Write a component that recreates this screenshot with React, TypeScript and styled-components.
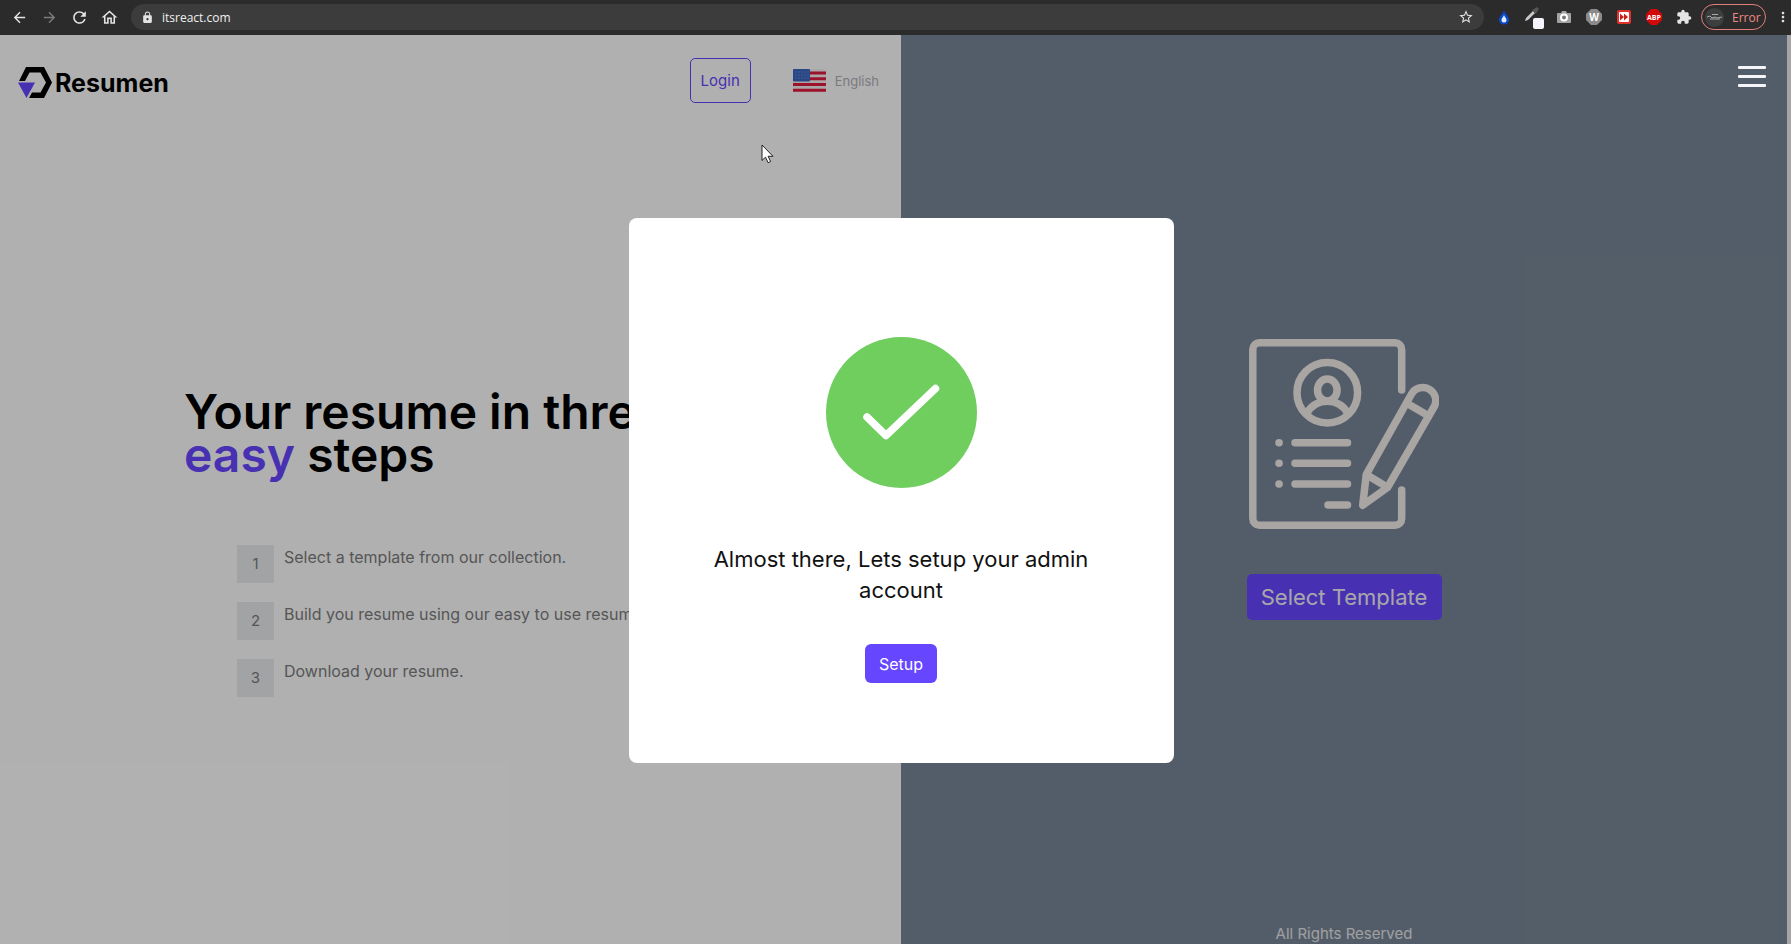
import React from "react";
import styled, { createGlobalStyle } from "styled-components";
import {
  MdArrowBack,
  MdArrowForward,
  MdRefresh,
  MdOutlineHome,
  MdLock,
  MdStarBorder,
  MdExtension,
  MdMoreVert,
} from "react-icons/md";

const accent = "#6646ff";

const GlobalStyle = createGlobalStyle`
  * { box-sizing: border-box; }
  body {
    margin: 0;
    font-family: Inter, "Open Sans", sans-serif;
  }
  h1, p, ol { margin: 0; padding: 0; }
  button { font: inherit; cursor: pointer; }
`;

const Window = styled.div`
  display: flex;
  flex-direction: column;
  height: 100vh;
  min-height: 760px;
  overflow: hidden;
`;

/* Browser toolbar */

const Toolbar = styled.div`
  display: flex;
  align-items: center;
  height: 35px;
  flex: none;
  padding: 0 0 1px 4px;
  background: #2b2b2b;
  color: #e4e4e4;
  font-family: "Open Sans", sans-serif;
  font-size: 12px;
`;

const ToolButton = styled.button<{ $dim?: boolean }>`
  display: flex;
  align-items: center;
  justify-content: center;
  width: 30px;
  height: 26px;
  flex: none;
  padding: 0;
  border: 0;
  background: none;
  color: ${(p) => (p.$dim ? "#7c7c7c" : "#e4e4e4")};
`;

const MenuButton = styled(ToolButton)`
  width: 16px;
  margin-left: 9px;
`;

const AddressBar = styled.div`
  display: flex;
  align-items: center;
  flex: 1;
  height: 26px;
  margin: 0 5px 0 7px;
  padding: 0 3px 0 10px;
  gap: 8px;
  border-radius: 13px;
  background: #3c3c3c;
`;

const AddressInput = styled.input`
  flex: 1;
  min-width: 0;
  padding: 0;
  border: 0;
  outline: 0;
  background: none;
  color: #f0f0f0;
  font: inherit;
`;

const Profile = styled.button`
  display: flex;
  align-items: center;
  gap: 8px;
  width: 65px;
  height: 26px;
  margin-left: 2px;
  padding: 0 3px;
  border: 1px solid #e0807c;
  border-radius: 13px;
  background: #2b2b2b;
  color: #f08a84;
`;

/* Page */

const Viewport = styled.div`
  position: relative;
  display: flex;
  flex: 1;
  min-height: 0;
`;

const Page = styled.div`
  position: relative;
  display: grid;
  grid-template-columns: 901fr 886fr;
  flex: 1;
`;

const ScrollTrack = styled.div`
  width: 4px;
  background: #a5a5a5;
`;

const Intro = styled.main`
  display: flex;
  flex-direction: column;
  background: #fdfdfd;
`;

const Header = styled.header`
  display: flex;
  align-items: center;
  padding: 23px 22px 0 18px;
`;

const Logo = styled.a`
  display: flex;
  align-items: center;
  gap: 3px;
  margin: 4px auto 0 0;
  color: #000;
  font-size: 25px;
  font-weight: 700;
  line-height: 32px;
  text-decoration: none;
`;

const LoginButton = styled.button`
  height: 45px;
  width: 61px;
  padding: 0;
  border: 1px solid ${accent};
  border-radius: 5px;
  background: none;
  color: ${accent};
  font-size: 15px;
`;

const Language = styled.button`
  display: flex;
  align-items: center;
  gap: 9px;
  margin-left: 42px;
  padding: 0;
  border: 0;
  background: none;
  color: #afafb4;
  font-size: 13px;
`;

const Pitch = styled.section`
  padding: 287px 40px 0 184px;
`;

const Title = styled.h1`
  max-width: 520px;
  font-size: 48px;
  font-weight: 600;
  line-height: 43px;
`;

const Highlight = styled.span`
  color: ${accent};
`;

const Steps = styled.ol`
  display: flex;
  flex-direction: column;
  gap: 19px;
  margin: 69px 0 0 53px;
  list-style: none;
`;

const Step = styled.li`
  display: flex;
  gap: 10px;
  color: #7b7b7b;
  font-size: 16px;
  line-height: 24px;
`;

const StepNumber = styled.span`
  width: 37px;
  height: 38px;
  flex: none;
  background: #e8eaec;
  font-size: 15px;
  line-height: 38px;
  text-align: center;
`;

const Aside = styled.aside`
  display: flex;
  flex-direction: column;
  align-items: center;
  background: #788697;
`;

const Action = styled.div`
  display: flex;
  flex: 1;
  flex-direction: column;
  align-items: center;
  gap: 45px;
  padding-top: 304px;
`;

const TemplateButton = styled.button`
  height: 46px;
  width: 195px;
  padding: 0;
  border: 0;
  border-radius: 5px;
  background: ${accent};
  color: #f0eef5;
  font-size: 22px;
`;

const Footer = styled.footer`
  color: #e4e4e6;
  font-size: 15px;
  line-height: 20px;
`;

const Overlay = styled.div`
  position: absolute;
  inset: 0;
  display: flex;
  align-items: center;
  justify-content: center;
  padding: 2px 0 0 15px;
  background: rgba(0, 0, 0, 0.3);
`;

const Dialog = styled.div`
  display: flex;
  flex-direction: column;
  align-items: center;
  width: 545px;
  height: 545px;
  padding: 119px 80px 0;
  border-radius: 8px;
  background: #fff;
`;

const Message = styled.p`
  margin: 56px 0 38px;
  color: #111;
  font-size: 22px;
  line-height: 31px;
  text-align: center;
`;

const SetupButton = styled.button`
  width: 72px;
  height: 39px;
  padding: 0;
  border: 0;
  border-radius: 6px;
  background: ${accent};
  color: #fff;
  font-size: 16px;
`;

const NavToggle = styled.button`
  position: absolute;
  top: 28px;
  right: 21px;
  display: flex;
  flex-direction: column;
  gap: 6px;
  padding: 3px 0;
  border: 0;
  background: none;
`;

const NavLine = styled.span`
  width: 28px;
  height: 3px;
  border-radius: 1px;
  background: #f4f5fa;
`;

const Pointer = styled.svg`
  position: absolute;
  top: 109px;
  left: 761px;
`;

const steps = [
  "Select a template from our collection.",
  "Build you resume using our easy to use resume builder.",
  "Download your resume.",
];

const DropIcon = () => (
  <svg width="12" height="16" viewBox="0 0 12 16">
    <path d="M6 1C7 5 11 7 11 11a5 4.500 0 0 1-10 0C1 7 5 5 6 1z" fill="#0b47c8" />
    <path d="M6 6c.5 2 2.500 3 2.500 5a2.500 2.500 0 0 1-5 0C3.500 9 5.500 8 6 6z" fill="#d8efff" />
  </svg>
);

const PickerIcon = () => (
  <svg width="22" height="24" viewBox="0 0 22 24">
    <path d="M2 16l1-3 7-7 2 2-7 7z" fill="#c9c9c9" />
    <path d="M9 5l4 4 1-2 2-3-2-2-3 2z" fill="#555" />
    <rect x="10" y="13" width="11" height="11" rx="2" fill="#f4f4fc" />
  </svg>
);

const CameraIcon = () => (
  <svg width="14" height="14" viewBox="0 0 14 14">
    <path d="M1 3h3l1-2h4l1 2h3a1 1 0 0 1 1 1v8a1 1 0 0 1-1 1H1a1 1 0 0 1-1-1V4a1 1 0 0 1 1-1z" fill="#a3a3a3" />
    <circle cx="7" cy="7.500" r="3" fill="#777" stroke="#fff" strokeWidth="2" />
  </svg>
);

const OctagonIcon = () => (
  <svg width="16" height="16" viewBox="0 0 16 16">
    <path d="M5 0h6l5 5v6l-5 5H5l-5-5V5z" fill="#8b8b8b" />
    <text x="8" y="12" textAnchor="middle" fontSize="10" fontWeight="700" fill="#fff">W</text>
  </svg>
);

const ForwardIcon = () => (
  <svg width="14" height="14" viewBox="0 0 14 14">
    <rect width="14" height="14" rx="2" fill="#e2302a" />
    <rect x="2" y="2" width="10" height="10" rx="1" fill="#fff" />
    <path d="M3 3.500L7 7l-4 3.500zM7 3.500L11 7l-4 3.500z" fill="#c8201c" />
  </svg>
);

const AdBlockIcon = () => (
  <svg width="16" height="16" viewBox="0 0 16 16">
    <path d="M5 0h6l5 5v6l-5 5H5l-5-5V5z" fill="#d40808" />
    <text x="8" y="11" textAnchor="middle" fontSize="7" fontWeight="700" fill="#fff">ABP</text>
  </svg>
);

const AvatarIcon = () => (
  <svg width="19" height="19" viewBox="0 0 19 19">
    <circle cx="9.500" cy="9.500" r="9.500" fill="#3d3f3e" />
    <path d="M7 6.500h6M2 9l3-1 2 2 3-1 2 1 5-1M5 11h10" stroke="#a7aaa8" fill="none" />
  </svg>
);

const LogoMark = () => (
  <svg width="34" height="32" viewBox="0 0 34 32" aria-hidden="true">
    <path
      d="M1 14L8 0h18l8 15.500L26 31H11l3-5.500h8.500L28 15.500 22.500 5.500h-11L7 14z"
      fill="#000"
    />
    <path d="M0 15.500h17L8.500 31z" fill={accent} />
  </svg>
);

const Flag = () => (
  <svg width="33" height="23" viewBox="0 0 33 23" aria-hidden="true">
    <rect width="33" height="23" rx="1" fill="#f4f0f2" />
    <path d="M0 4h33M0 9.700h33M0 15.400h33M0 21.300h33" stroke="#e01c3f" strokeWidth="3" />
    <rect width="17" height="12.500" rx="1" fill="#3b66c0" />
    <path d="M2.500 3h13M2.500 6h13M2.500 9h13" stroke="#8fa9e0" strokeWidth="1" strokeDasharray="1 2" />
  </svg>
);

const ResumeDrawing = () => (
  <svg
    width="190"
    height="190"
    viewBox="0 0 190 190"
    fill="none"
    stroke="#f1ecea"
    strokeWidth="7.500"
    strokeLinecap="round"
    strokeLinejoin="round"
    aria-hidden="true"
  >
    <path d="M152.700 51V10.500a6.700 6.700 0 0 0-6.700-6.700H10.500a6.700 6.700 0 0 0-6.700 6.700v169a6.700 6.700 0 0 0 6.700 6.700H146a6.700 6.700 0 0 0 6.700-6.700V151" />
    <circle cx="78.300" cy="53.700" r="30.300" />
    <ellipse cx="78.300" cy="51" rx="9.800" ry="11" />
    <path d="M58 74Q65 62.300 78.300 62.300T98.700 74" />
    <path d="M46 103.700h52.500M46 124.300h52.500M46 145h52.500M79 166h19.500" />
    <path d="M30 103.700h.1M30 124.300h.1M30 145h.1" />
    <path d="M113.700 166.300l3.600-31L162.500 55a12.800 12.800 0 0 1 22.500 13L138.500 148.500z" />
    <path d="M118 136l20 12M160 65.500l18 10.500" />
  </svg>
);

const SuccessIcon = () => (
  <svg width="151" height="151" viewBox="0 0 151 151" aria-hidden="true">
    <circle cx="75.500" cy="75.500" r="75.500" fill="#6fce5e" />
    <path
      d="M41 80l19 18.500 49.500-47"
      fill="none"
      stroke="#fff"
      strokeWidth="7.500"
      strokeLinecap="round"
      strokeLinejoin="round"
    />
  </svg>
);

export default function App() {
  return (
    <Window>
      <GlobalStyle />
      <Toolbar>
        <ToolButton aria-label="Back"><MdArrowBack size={17} /></ToolButton>
        <ToolButton aria-label="Forward" $dim><MdArrowForward size={17} /></ToolButton>
        <ToolButton aria-label="Reload"><MdRefresh size={19} /></ToolButton>
        <ToolButton aria-label="Home"><MdOutlineHome size={19} /></ToolButton>
        <AddressBar>
          <MdLock size={13} />
          <AddressInput aria-label="Address" defaultValue="itsreact.com" />
          <ToolButton aria-label="Bookmark"><MdStarBorder size={16} /></ToolButton>
        </AddressBar>
        <ToolButton aria-label="Drop"><DropIcon /></ToolButton>
        <ToolButton aria-label="Color picker"><PickerIcon /></ToolButton>
        <ToolButton aria-label="Capture"><CameraIcon /></ToolButton>
        <ToolButton aria-label="Inspector"><OctagonIcon /></ToolButton>
        <ToolButton aria-label="Speed"><ForwardIcon /></ToolButton>
        <ToolButton aria-label="Ad blocker"><AdBlockIcon /></ToolButton>
        <ToolButton aria-label="Extensions"><MdExtension size={16} /></ToolButton>
        <Profile><AvatarIcon />Error</Profile>
        <MenuButton aria-label="Menu"><MdMoreVert size={18} /></MenuButton>
      </Toolbar>
      <Viewport>
        <Page>
          <Intro>
            <Header>
              <Logo href="#"><LogoMark />Resumen</Logo>
              <LoginButton>Login</LoginButton>
              <Language><Flag />English</Language>
            </Header>
            <Pitch>
              <Title>
                Your resume in three <Highlight>easy</Highlight> steps
              </Title>
              <Steps>
                {steps.map((text, i) => (
                  <Step key={text}>
                    <StepNumber>{i + 1}</StepNumber>
                    {text}
                  </Step>
                ))}
              </Steps>
            </Pitch>
          </Intro>
          <Aside>
            <Action>
              <ResumeDrawing />
              <TemplateButton>Select Template</TemplateButton>
            </Action>
            <Footer>All Rights Reserved</Footer>
          </Aside>
          <Overlay>
            <Dialog role="dialog" aria-modal="true" aria-labelledby="setup-message">
              <SuccessIcon />
              <Message id="setup-message">Almost there, Lets setup your admin account</Message>
              <SetupButton>Setup</SetupButton>
            </Dialog>
          </Overlay>
          <NavToggle aria-label="Open navigation">
            <NavLine />
            <NavLine />
            <NavLine />
          </NavToggle>
          <Pointer width="14" height="20" viewBox="0 0 14 20" aria-hidden="true">
            <path d="M1 1v15.500l3.500-3.300 2.600 5.500 2.500-1.200-2.500-5.200H12z" fill="#fff" stroke="#222" />
          </Pointer>
        </Page>
        <ScrollTrack />
      </Viewport>
    </Window>
  );
}
